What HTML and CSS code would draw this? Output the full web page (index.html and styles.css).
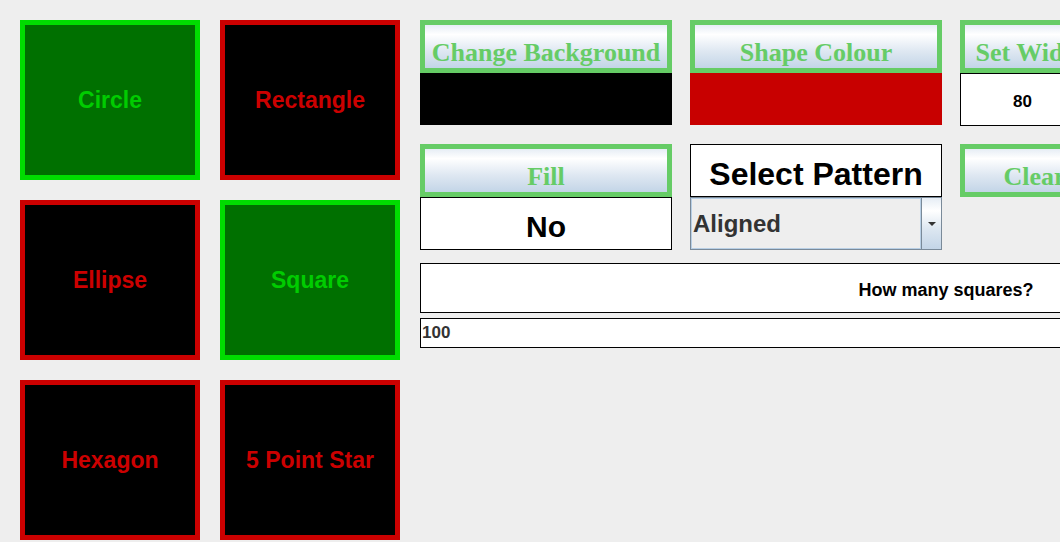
FILE: index.html
```html
<!DOCTYPE html>
<html lang="en">
<head>
    <meta charset="UTF-8">
    <meta name="viewport" content="width=device-width, initial-scale=1.0">
    <title>Shape Drawer</title>
    <link rel="stylesheet" href="styles.css">
</head>
<body>
    <div class="app">
        <!-- Shape picker -->
        <div class="shapes">
            <div class="tile selected">Circle</div>
            <div class="tile">Rectangle</div>
            <div class="tile">Ellipse</div>
            <div class="tile selected">Square</div>
            <div class="tile">Hexagon</div>
            <div class="tile">5 Point Star</div>
        </div>

        <!-- Settings -->
        <div class="controls">
            <div class="control-row">
                <div class="group">
                    <button type="button" class="btn">Change Background</button>
                    <div class="swatch swatch-black"></div>
                </div>
                <div class="group">
                    <button type="button" class="btn">Shape Colour</button>
                    <div class="swatch swatch-red"></div>
                </div>
                <div class="group">
                    <button type="button" class="btn">Set Width &amp; Height</button>
                    <div class="field field-size">80</div>
                </div>
            </div>

            <div class="control-row">
                <div class="group">
                    <button type="button" class="btn">Fill</button>
                    <div class="field field-big field-no">No</div>
                </div>
                <div class="group">
                    <div class="field field-big">Select Pattern</div>
                    <div class="combo">
                        <div class="combo-value">Aligned</div>
                        <div class="combo-arrow"><span class="caret"></span></div>
                    </div>
                </div>
                <div class="group">
                    <button type="button" class="btn">Clear Drawing</button>
                </div>
            </div>

            <div class="prompt">How many squares?</div>
            <div class="count">100</div>
        </div>
    </div>
</body>
</html>
```

FILE: styles.css
```css
* {
    margin: 0;
    padding: 0;
    box-sizing: border-box;
}

body {
    width: 1060px;
    height: 542px;
    overflow: hidden;
    background-color: #eeeeee;
    font-family: 'Liberation Sans', Arial, sans-serif;
}

.app {
    display: flex;
    gap: 20px;
    padding: 20px;
}

.shapes {
    display: grid;
    grid-template-columns: repeat(2, 180px);
    grid-auto-rows: 160px;
    gap: 20px;
    flex-shrink: 0;
}

.tile {
    display: flex;
    justify-content: center;
    align-items: center;
    background-color: #000;
    border: 5px solid #cc0000;
    color: #cc0000;
    font-size: 23px;
    font-weight: bold;
}

.tile.selected {
    background-color: #007000;
    border-color: #00dd00;
    color: #00cc00;
}

.controls {
    display: flex;
    flex-direction: column;
    flex-shrink: 0;
}

.control-row {
    display: flex;
    gap: 18px;
    margin-bottom: 18px;
}

.control-row + .control-row {
    margin-bottom: 13px;
}

.group {
    width: 252px;
    display: flex;
    flex-direction: column;
}

.btn {
    height: 53px;
    display: flex;
    justify-content: center;
    align-items: center;
    padding-top: 12px;
    white-space: nowrap;
    border: 5px solid #66cc66;
    background: linear-gradient(to bottom, #e6edf5 0%, #ffffff 22%, #dfe8f2 60%, #c3d5e7 100%);
    color: #66cc66;
    font-family: 'Liberation Serif', 'Times New Roman', serif;
    font-size: 26px;
    font-weight: bold;
}

.swatch {
    height: 52px;
}

.swatch-black {
    background-color: #000;
}

.swatch-red {
    background-color: #c80000;
}

.field {
    height: 53px;
    display: flex;
    align-items: center;
    background-color: #fff;
    border: 1px solid #000;
    color: #000;
}

.field-size {
    padding: 4px 0 0 52px;
    font-size: 17px;
    font-weight: bold;
}

.field-big {
    justify-content: center;
    padding-top: 7px;
    font-size: 32px;
    font-weight: bold;
}

.field-no {
    font-size: 30px;
}

.combo {
    height: 53px;
    display: flex;
    border: 1px solid #7a8a99;
    background-color: #eeeeee;
}

.combo-value {
    flex: 1;
    display: flex;
    align-items: center;
    padding-left: 2px;
    box-shadow: inset 0 0 0 1px #b8cfe5;
    color: #333;
    font-size: 24px;
    font-weight: bold;
}

.combo-arrow {
    width: 20px;
    display: flex;
    justify-content: center;
    align-items: center;
    border-left: 1px solid #7a8a99;
    background: linear-gradient(to bottom, #e6edf5 0%, #ffffff 25%, #dde7f1 60%, #c3d5e7 100%);
}

.caret {
    width: 0;
    height: 0;
    border-left: 4px solid transparent;
    border-right: 4px solid transparent;
    border-top: 4px solid #333;
}

.prompt {
    width: 1052px;
    height: 50px;
    display: flex;
    justify-content: center;
    align-items: center;
    padding-top: 4px;
    background-color: #fff;
    border: 1px solid #000;
    font-size: 18px;
    font-weight: bold;
}

.count {
    width: 1052px;
    height: 30px;
    margin-top: 5px;
    display: flex;
    align-items: center;
    padding-left: 1px;
    background-color: #fff;
    border: 1px solid #000;
    color: #333;
    font-size: 17px;
    font-weight: bold;
}
```
